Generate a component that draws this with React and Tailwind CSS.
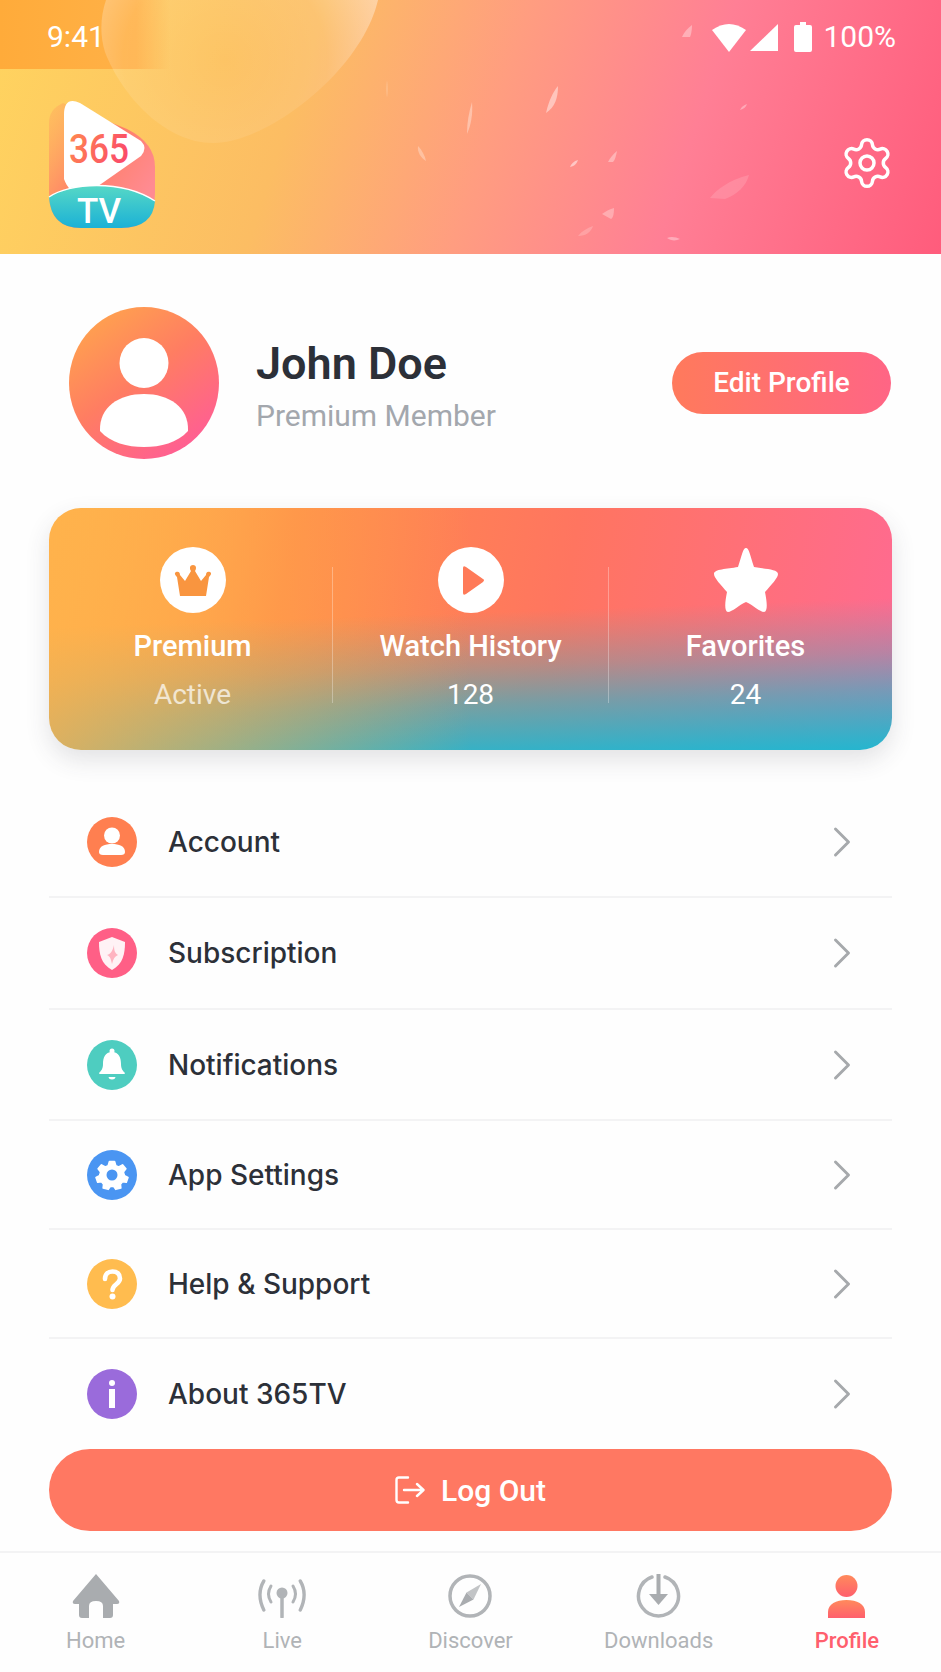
import { ChevronRight, Settings } from "lucide-react";

const petals = [
  { d: "M546 113 C549 100 553 92 558 86 C558 98 555 107 546 113Z", o: 0.45 },
  { d: "M467 134 C467 122 469 112 472 102 C473 114 471 125 467 134Z", o: 0.35 },
  { d: "M682 37 C684 32 688 28 692 25 C692 30 691 35 690 37Z", o: 0.35 },
  { d: "M740 110 C741 107 744 105 747 104 C746 107 744 109 740 110Z", o: 0.35 },
  { d: "M418 146 C422 150 425 156 426 161 C421 158 417 152 418 146Z", o: 0.3 },
  { d: "M570 167 C571 164 574 161 578 160 C577 163 575 166 570 167Z", o: 0.5 },
  { d: "M608 162 C610 158 613 154 617 151 C616 156 615 160 613 162Z", o: 0.35 },
  { d: "M710 198 C716 190 729 180 749 175 C746 186 738 194 725 199Z", o: 0.14 },
  { d: "M602 214 C606 211 610 209 614 208 C614 214 613 218 611 219Z", o: 0.3 },
  { d: "M578 236 C582 231 587 228 593 226 C591 232 586 236 578 236Z", o: 0.2 },
  { d: "M667 238 C671 236 676 237 680 239 C676 241 671 241 667 238Z", o: 0.35 },
  { d: "M387 80 C388 86 388 92 387 98 C386 92 386 86 387 80Z", o: 0.2 },
];

function HeaderArt() {
  return (
    <svg viewBox="0 0 941 254" className="absolute inset-0 h-full w-full">
      <defs>
        <linearGradient id="band" x1="0" x2="1" y1="0" y2="0">
          <stop offset="0" stopColor="#ffab3a" />
          <stop offset="0.8" stopColor="#ffb147" />
          <stop offset="1" stopColor="#ffb147" stopOpacity="0" />
        </linearGradient>
        <radialGradient id="blob" gradientUnits="userSpaceOnUse" cx="225" cy="60" r="170">
          <stop offset="0" stopColor="#fff" stopOpacity="0.02" />
          <stop offset="0.6" stopColor="#fff" stopOpacity="0.1" />
          <stop offset="1" stopColor="#fff" stopOpacity="0.42" />
        </radialGradient>
      </defs>
      <rect x="0" y="0" width="170" height="69" fill="url(#band)" />
      <path d="M105 52 C122 96 165 143 213 143 C268 143 362 70 378 0 L106 0 C100 18 100 36 105 52Z" fill="url(#blob)" />
      {petals.map((p) => (
        <path key={p.d} d={p.d} fill="#fff" fillOpacity={p.o} />
      ))}
    </svg>
  );
}

function Logo() {
  return (
    <svg viewBox="0 0 106 128" className="relative h-[128px] w-[106px] overflow-visible">
      <defs>
        <linearGradient id="logoBody" x1="0" x2="0.9" y1="0" y2="0.75">
          <stop offset="0" stopColor="#ffb45c" stopOpacity="0.5" />
          <stop offset="0.55" stopColor="#ff7f68" />
          <stop offset="1" stopColor="#ff8b92" />
        </linearGradient>
        <linearGradient id="logoTeal" x1="0" x2="0" y1="0" y2="1">
          <stop offset="0" stopColor="#56d8c6" />
          <stop offset="1" stopColor="#1bb1d6" />
        </linearGradient>
        <linearGradient id="logoNum" x1="0" x2="1" y1="0" y2="0.4">
          <stop offset="0" stopColor="#ff8b4f" />
          <stop offset="1" stopColor="#fb4d68" />
        </linearGradient>
      </defs>
      <path d="M14 2 L78 28 Q106 42 106 66 L106 92 Q106 127 72 127 L32 127 Q0 127 0 92 L0 22 Q0 8 14 2Z" fill="url(#logoBody)" />
      <path d="M15 14 Q15 -5 31 2 Q36 5 92 40 Q99 47 92 55 L42 90 Q22 98 15 78Z" fill="#fff" />
      <path d="M0 96 C20 82 72 78 106 100 L106 100 Q104 127 72 127 L32 127 Q2 127 0 96Z" fill="url(#logoTeal)" />
      <path d="M0 96 C20 82 72 78 106 100" fill="none" stroke="#fff" strokeWidth="1.4" />
      <text x="50" y="62" textAnchor="middle" textLength="60" lengthAdjust="spacingAndGlyphs" fontFamily="Roboto" fontWeight="500" fontSize="40" fill="url(#logoNum)">
        365
      </text>
      <text x="50" y="122" textAnchor="middle" fontFamily="Roboto" fontWeight="500" fontSize="35" fill="#fff">
        TV
      </text>
    </svg>
  );
}

function StatusBar() {
  return (
    <div className="relative flex h-[74px] items-center justify-between pl-[47px] pr-[45px] text-[30px] leading-none text-white">
      <span>9:41</span>
      <div className="flex items-center">
        <svg viewBox="0 0 34 30" className="h-[30px] w-[34px]">
          <path d="M0 8 Q17 -4 34 8 L17 30Z" fill="#fff" />
        </svg>
        <svg viewBox="0 0 28 30" className="ml-[4px] h-[30px] w-[28px]">
          <path d="M28 2 L28 29 L0 29Z" fill="#fff" />
        </svg>
        <svg viewBox="0 0 18 30" className="ml-[16px] h-[30px] w-[18px]">
          <path d="M6 0 H12 V3 H16 Q18 3 18 5 V28 Q18 30 16 30 H2 Q0 30 0 28 V5 Q0 3 2 3 H6Z" fill="#fff" />
        </svg>
        <span className="ml-[11px]">100%</span>
      </div>
    </div>
  );
}

function Avatar() {
  return (
    <svg viewBox="0 0 150 152" className="h-[152px] w-[150px] shrink-0">
      <defs>
        <linearGradient id="avatarFill" x1="0.1" x2="0.75" y1="0.05" y2="0.95">
          <stop offset="0" stopColor="#ffa54d" />
          <stop offset="0.5" stopColor="#ff7d62" />
          <stop offset="1" stopColor="#ff5f92" />
        </linearGradient>
      </defs>
      <ellipse cx="75" cy="76" rx="75" ry="76" fill="url(#avatarFill)" />
      <ellipse cx="75" cy="56" rx="24.5" ry="25" fill="#fff" />
      <path d="M31 124 C30 100 50 87 75 87 C100 87 120 100 119 124 C108 136 92 140 75 140 C58 140 42 136 31 124Z" fill="#fff" />
    </svg>
  );
}

function Crown() {
  return (
    <svg viewBox="0 0 66 66" className="h-[66px] w-[66px]">
      <circle cx="33" cy="33" r="33" fill="#fff" />
      <path d="M20 49 L17 30 C15 28 14 26 16 25 C19 24 20 26 20 28 L25 34 L31 24 C29 21 30 18 33 18 C36 18 37 21 35 24 L41 34 L46 28 C46 26 47 24 50 25 C52 26 51 28 49 30 L46 49Z" fill="#f9953f" />
    </svg>
  );
}

function PlayDisc() {
  return (
    <svg viewBox="0 0 66 66" className="h-[66px] w-[66px]">
      <circle cx="33" cy="33" r="33" fill="#fff" />
      <path d="M25 21 Q25 18 28 20 L45 32 Q47 33 45 35 L28 47 Q25 49 25 46Z" fill="#ff7a58" />
    </svg>
  );
}

function StarIcon() {
  return (
    <svg viewBox="0 0 66 66" className="h-[66px] w-[66px]">
      <path d="M33 1 C36 1 37 8 41 20 C52 22 65 22 65 27 C65 31 58 38 52 45 C54 55 55 64 51 65 C47 65 40 58 33 55 C26 58 19 65 15 65 C11 64 12 55 14 45 C8 38 1 31 1 27 C1 22 14 22 25 20 C29 8 30 1 33 1Z" fill="#fff" />
    </svg>
  );
}

function Stat({ icon, label, value, valueClass }) {
  return (
    <div className="flex flex-col items-center pt-[39px] text-white">
      {icon}
      <div className="mt-[17px] text-[29px] font-medium leading-[32px]">{label}</div>
      <div className={`mt-[17px] text-[28px] leading-[32px] ${valueClass}`}>{value}</div>
    </div>
  );
}

function AccountGlyph() {
  return (
    <>
      <circle cx="25" cy="18.5" r="8" fill="#fff" />
      <path d="M12 35 C12 29 18 27 25 27 C32 27 38 29 38 35 Q38 38 34 38 H16 Q12 38 12 35Z" fill="#fff" />
    </>
  );
}

function ShieldGlyph() {
  return (
    <>
      <path d="M25 9 L38 14 C38 26 36 36 25 42 C14 36 12 26 12 14Z" fill="#fff" fillOpacity="0.92" />
      <path d="M27 17 C27 23 28 25 31 27 C28 28 26 31 25 36 C24 31 23 28 20 27 C24 26 26 22 27 17Z" fill="#ffb3c0" />
    </>
  );
}

function BellGlyph() {
  return (
    <>
      <circle cx="25" cy="11" r="2.5" fill="#fff" />
      <path d="M25 12 C18 12 16 18 16 24 C16 29 14 31 12 33 Q12 34 13 34 H37 Q38 34 38 33 C36 31 34 29 34 24 C34 18 32 12 25 12Z" fill="#fff" />
      <path d="M21.5 37 H28.5 Q28 39.5 25 39.5 Q22 39.5 21.5 37Z" fill="#fff" />
    </>
  );
}

function GearGlyph() {
  return (
    <>
      <g transform="translate(25 25) scale(0.84) translate(-25 -25)">
        <path d="M22 9 H28 L29.5 14 L33 15.5 L37.5 13 L41.5 17.5 L38.5 21.5 L39.5 25 L40 26 L44 28 L42 33.5 L37.5 33 L35 36 L35.5 40.5 L29.5 42 L27 38.5 H23 L20.5 42 L14.5 40.5 L15 36 L12.5 33 L8 33.5 L6 28 L10 26 L10.5 25 L11.5 21.5 L8.5 17.5 L12.5 13 L17 15.5 L20.5 14Z" fill="#fff" stroke="#fff" strokeLinejoin="round" strokeWidth="2" />
      </g>
      <circle cx="25" cy="25" r="5.5" fill="#4a95f2" />
    </>
  );
}

function HelpGlyph() {
  return (
    <>
      <path d="M18 20 C18 15 21 12.5 25.5 12.5 C30 12.5 33 15 33 19.5 C33 25 25.5 25.5 25.5 31" fill="none" stroke="#fff" strokeWidth="4.6" strokeLinecap="round" />
      <circle cx="25.5" cy="37.5" r="3" fill="#fff" />
    </>
  );
}

function InfoGlyph() {
  return (
    <>
      <circle cx="25" cy="14" r="3" fill="#fff" />
      <rect x="22" y="20" width="6" height="19" fill="#fff" />
    </>
  );
}

const menuItems = [
  { label: "Account", bg: "bg-[#ff7f50]", glyph: <AccountGlyph />, row: "h-[110px] border-b-2 border-[#f3f3f4]" },
  { label: "Subscription", bg: "bg-[#ff5f86]", glyph: <ShieldGlyph />, row: "h-[112px] border-b-2 border-[#f3f3f4]" },
  { label: "Notifications", bg: "bg-[#4ecdc0]", glyph: <BellGlyph />, row: "h-[111px] border-b-2 border-[#f3f3f4]" },
  { label: "App Settings", bg: "bg-[#4a95f2]", glyph: <GearGlyph />, row: "h-[109px] border-b-2 border-[#f3f3f4]" },
  { label: "Help & Support", bg: "bg-[#ffbc4f]", glyph: <HelpGlyph />, row: "h-[109px] border-b-2 border-[#f3f3f4]" },
  { label: "About 365TV", bg: "bg-[#9a6bdb]", glyph: <InfoGlyph />, row: "h-[110px]" },
];

function MenuRow({ item }) {
  return (
    <div className={`flex items-center pl-[38px] pr-[24px] ${item.row}`}>
      <div className={`h-[50px] w-[50px] shrink-0 rounded-full ${item.bg}`}>
        <svg viewBox="0 0 50 50" className="h-full w-full">
          {item.glyph}
        </svg>
      </div>
      <span className="ml-[31px] flex-1 [font-family:Inter,sans-serif] text-[28px] font-medium leading-none text-[#2c3038]">
        {item.label}
      </span>
      <ChevronRight size={52} strokeWidth={1.35} className="text-[#a6a9ac]" />
    </div>
  );
}

function HomeIcon() {
  return (
    <svg viewBox="0 0 48 44" className="h-[44px] w-[48px]">
      <path d="M24 0 L47 27 Q48 30 45 30 H41 V41 Q41 44 38 44 H31 V32 Q31 27 24 27 Q17 27 17 32 V44 H10 Q7 44 7 41 V30 H3 Q0 30 1 27Z" fill="#a9acaf" />
    </svg>
  );
}

function LiveIcon() {
  return (
    <svg viewBox="0 0 48 40" className="h-[40px] w-[48px]" fill="none" stroke="#b1b4b7" strokeLinecap="round">
      <circle cx="24" cy="15" r="5.5" fill="#b1b4b7" stroke="none" />
      <path d="M24 18 V39" strokeWidth="3.5" />
      <path d="M13 8 Q8 16 13 24 M35 8 Q40 16 35 24" strokeWidth="3" />
      <path d="M5 3 Q-3 16 5 32 M43 3 Q51 16 43 32" strokeWidth="3.5" transform="translate(1 0) scale(0.96 1)" />
    </svg>
  );
}

function DiscoverIcon() {
  return (
    <svg viewBox="0 0 44 44" className="h-[44px] w-[44px]">
      <circle cx="22" cy="22" r="20" fill="none" stroke="#b1b4b7" strokeWidth="3.5" />
      <path d="M33 10 L25.5 25.5 L18.5 18.5Z" fill="#c2c4c6" />
      <path d="M11 33 L18.5 18.5 L25.5 25.5Z" fill="#a9acaf" />
    </svg>
  );
}

function DownloadIcon() {
  return (
    <svg viewBox="0 0 45 44" className="h-[44px] w-[45px]">
      <path d="M16 3 A20 20 0 1 0 29 3" fill="none" stroke="#b1b4b7" strokeWidth="3.5" strokeLinecap="round" />
      <path d="M22.5 0 V22" stroke="#a9acaf" strokeWidth="4" />
      <path d="M13 20 H32 L22.5 31Z" fill="#a9acaf" />
    </svg>
  );
}

function ProfileIcon() {
  return (
    <svg viewBox="0 0 37 43" className="h-[43px] w-[37px]">
      <defs>
        <linearGradient id="navProfile" x1="0" x2="0" y1="0" y2="1">
          <stop offset="0" stopColor="#ff8a5c" />
          <stop offset="1" stopColor="#ff5f6d" />
        </linearGradient>
      </defs>
      <ellipse cx="18.5" cy="11" rx="11" ry="11" fill="url(#navProfile)" />
      <path d="M0 43 V37 C0 29 8 25 18.5 25 C29 25 37 29 37 37 V43Z" fill="url(#navProfile)" />
    </svg>
  );
}

const navItems = [
  { label: "Home", icon: <HomeIcon />, text: "text-[#b0b3b6]", cell: "pl-[3px]" },
  { label: "Live", icon: <LiveIcon />, text: "text-[#b0b3b6]", cell: "" },
  { label: "Discover", icon: <DiscoverIcon />, text: "text-[#b0b3b6]", cell: "" },
  { label: "Downloads", icon: <DownloadIcon />, text: "text-[#b0b3b6]", cell: "" },
  { label: "Profile", icon: <ProfileIcon />, text: "text-[#ff5f6d] font-medium", cell: "" },
];

export default function App() {
  return (
    <div className="flex h-[1672px] w-full flex-col overflow-hidden bg-[#fefefe] [font-family:Roboto,sans-serif]">
      <header className="relative h-[254px] shrink-0 bg-[linear-gradient(108deg,#ffd45f_0%,#fcbd63_32%,#ff9d80_52%,#ff7f95_72%,#ff5c7c_100%)]">
        <HeaderArt />
        <StatusBar />
        <div className="relative flex items-start justify-between pl-[49px] pr-[46px] pt-[27px]">
          <Logo />
          <Settings size={56} strokeWidth={1.5} className="mt-[34px] text-white" />
        </div>
      </header>

      <section className="flex items-center pl-[69px] pr-[50px] pt-[53px]">
        <Avatar />
        <div className="ml-[37px] flex-1 pt-[7px]">
          <div className="text-[45px] font-semibold leading-[50px] text-[#2c3038]">John Doe</div>
          <div className="mt-[9px] text-[30px] leading-[36px] text-[#a3a7ad]">Premium Member</div>
        </div>
        <button className="h-[62px] w-[219px] rounded-full bg-[linear-gradient(90deg,#ff7a5c,#ff6585)] text-[28px] font-medium text-white">
          Edit Profile
        </button>
      </section>

      <section className="mx-[49px] mt-[49px] grid h-[242px] shrink-0 grid-cols-[283px_1px_275px_1px_282px] rounded-[32px] bg-[linear-gradient(90deg,rgba(255,175,75,0.8)_0%,rgba(255,175,75,0.5)_20%,transparent_50%),linear-gradient(178deg,transparent_44%,rgba(36,182,207,0.12)_52%,rgba(36,182,207,0.32)_64%,rgba(36,182,207,0.62)_78%,rgba(36,182,207,0.92)_95%,#24b6cf_100%),linear-gradient(100deg,#ffc04f_0%,#ff8c4a_28%,#ff7560_60%,#ff6a92_100%)] shadow-[0_10px_24px_rgba(60,60,70,0.14)]">
        <div className="pl-[4px]">
          <Stat icon={<Crown />} label="Premium" value="Active" valueClass="opacity-70" />
        </div>
        <div className="mt-[59px] h-[136px] bg-white/30" />
        <Stat icon={<PlayDisc />} label="Watch History" value="128" valueClass="" />
        <div className="mt-[59px] h-[136px] bg-white/30" />
        <div className="pr-[9px]">
          <Stat icon={<StarIcon />} label="Favorites" value="24" valueClass="" />
        </div>
      </section>

      <nav className="mx-[49px] mt-[38px] shrink-0">
        {menuItems.map((item) => (
          <MenuRow key={item.label} item={item} />
        ))}
      </nav>

      <button className="mx-[49px] flex h-[82px] shrink-0 items-center justify-center rounded-full bg-[#ff7862] text-[30px] font-medium text-white">
        <svg viewBox="0 0 30 28" className="mr-[2px] h-[28px] w-[30px]" fill="none" stroke="#fff" strokeWidth="2.4" strokeLinecap="round" strokeLinejoin="round">
          <path d="M13 1.5 H4 Q1.5 1.5 1.5 4 V24 Q1.5 26.5 4 26.5 H13" />
          <path d="M9 14 H28 M22 8 L28.5 14 L22 20" />
        </svg>
        <span className="ml-[14px]">Log Out</span>
      </button>

      <footer className="mt-[20px] grid flex-1 grid-cols-5 border-t-2 border-[#f3f3f4] pt-[19px]">
        {navItems.map((item) => (
          <div key={item.label} className={`flex flex-col items-center ${item.cell}`}>
            <div className="flex h-[46px] items-end justify-center">{item.icon}</div>
            <span className={`mt-[10px] text-[22px] leading-[26px] ${item.text}`}>{item.label}</span>
          </div>
        ))}
      </footer>
    </div>
  );
}
